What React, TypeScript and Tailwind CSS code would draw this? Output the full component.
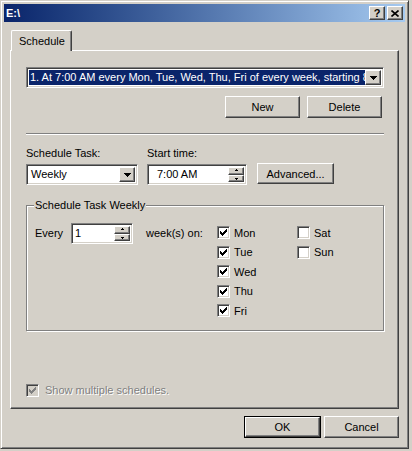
import type { ReactNode } from "react";

// classic win2k bevels
const raised =
    "border border-t-white border-l-white border-r-[#404040] border-b-[#404040] shadow-[inset_-1px_-1px_#808080] bg-[#d4d0c8]";
const sunken =
    "border border-t-[#808080] border-l-[#808080] border-r-white border-b-white shadow-[inset_1px_1px_#404040,inset_-1px_-1px_#d4d0c8]";

function Check({ disabled }: { disabled?: boolean }) {
    const fill = disabled ? "#808080" : "#000";
    return (
        <svg width="7" height="7" viewBox="0 0 7 7" shapeRendering="crispEdges">
            {[2, 3, 4, 3, 2, 1, 0].map((y, x) => (
                <rect key={x} x={x} y={y} width="1" height="3" fill={fill} />
            ))}
        </svg>
    );
}

function CheckBox({ checked, disabled }: { checked?: boolean; disabled?: boolean }) {
    return (
        <div
            className={`${sunken} flex h-[13px] w-[13px] shrink-0 items-center justify-center ${
                disabled ? "bg-[#d4d0c8]" : "bg-white"
            }`}
        >
            {checked && <Check disabled={disabled} />}
        </div>
    );
}

function DownArrow() {
    return (
        <svg width="7" height="4" viewBox="0 0 7 4" shapeRendering="crispEdges">
            <rect x="0" y="0" width="7" height="1" fill="#000" />
            <rect x="1" y="1" width="5" height="1" fill="#000" />
            <rect x="2" y="2" width="3" height="1" fill="#000" />
            <rect x="3" y="3" width="1" height="1" fill="#000" />
        </svg>
    );
}

function TinyArrow({ up }: { up?: boolean }) {
    return (
        <svg width="5" height="3" viewBox="0 0 5 3" shapeRendering="crispEdges">
            {up ? (
                <>
                    <rect x="2" y="0" width="1" height="1" fill="#000" />
                    <rect x="1" y="1" width="3" height="1" fill="#000" />
                </>
            ) : (
                <>
                    <rect x="1" y="1" width="3" height="1" fill="#000" />
                    <rect x="2" y="2" width="1" height="1" fill="#000" />
                </>
            )}
        </svg>
    );
}

function DropButton() {
    return (
        <div className={`${raised} flex h-full w-[16px] shrink-0 items-center justify-center`}>
            <DownArrow />
        </div>
    );
}

function SpinButtons() {
    return (
        <div className="flex h-full w-[16px] shrink-0 flex-col">
            <div className={`${raised} flex flex-1 items-center justify-center`}>
                <TinyArrow up />
            </div>
            <div className={`${raised} flex flex-1 items-center justify-center`}>
                <TinyArrow />
            </div>
        </div>
    );
}

function Button({ className, children }: { className: string; children: ReactNode }) {
    return <div className={`${raised} flex items-center justify-center ${className}`}>{children}</div>;
}

function Day({ label, checked }: { label: string; checked?: boolean }) {
    return (
        <div className="flex h-[19.5px] items-center gap-[4px]">
            <CheckBox checked={checked} />
            <span>{label}</span>
        </div>
    );
}

export default function App() {
    return (
        <div className="h-[451px] w-[412px] bg-[#d4d0c8] font-['Liberation_Sans',Arial,sans-serif] text-[11px] leading-[14px] text-black">
            <div className="flex h-[449px] w-[409px] flex-col border border-t-[#d4d0c8] border-l-[#d4d0c8] border-r-[#404040] border-b-[#404040] p-[3px] shadow-[inset_1px_1px_white,inset_-1px_-1px_#808080]">
                {/* title bar */}
                <div className="flex h-[18px] items-center bg-linear-to-r from-[#0a246a] to-[#a6caf0] pl-[2px] pr-[2px]">
                    <span className="font-bold text-white">{"E:\\"}</span>
                    <div className="ml-auto flex gap-[2px]">
                        <div className={`${raised} flex h-[14px] w-[16px] items-center justify-center text-[11px] font-bold leading-none`}>
                            ?
                        </div>
                        <div className={`${raised} flex h-[14px] w-[16px] items-center justify-center`}>
                            <svg width="8" height="7" viewBox="0 0 8 7">
                                <path d="M0.5 0.5 L7.5 6.5 M7.5 0.5 L0.5 6.5" stroke="#000" strokeWidth="1.6" />
                            </svg>
                        </div>
                    </div>
                </div>

                <div className="flex flex-col px-[6px] pt-[8px]">
                    <div className="relative z-10 -mb-[1px] ml-[1px] flex h-[21px] w-[61px] items-center rounded-t-[2px] border-t border-l border-r border-t-white border-l-white border-r-[#404040] bg-[#d4d0c8] pl-[7px] shadow-[inset_-1px_0_#808080]">
                        Schedule
                    </div>

                    <div className={`${raised} flex h-[359px] flex-col pl-[15px] pt-[16px]`}>
                        <div className={`${sunken} flex h-[21px] w-[358px] bg-white p-[2px]`}>
                            <div className="flex-1 overflow-hidden whitespace-nowrap bg-[#0a246a] pl-[1px] leading-[15px] text-white">
                                1. At 7:00 AM every Mon, Tue, Wed, Thu, Fri of every week, starting 8/1/2005
                            </div>
                            <DropButton />
                        </div>

                        <div className="mt-[8px] flex w-[358px] justify-end gap-[7px] pr-[2px]">
                            <Button className="h-[22px] w-[75px]">New</Button>
                            <Button className="h-[22px] w-[75px]">Delete</Button>
                        </div>

                        <div className="mt-[15px] h-[2px] w-[358px] border-t border-b border-t-[#808080] border-b-white" />

                        <div className="mt-[11px] flex items-end">
                            <div className="flex w-[112px] flex-col gap-[4px]">
                                <span>Schedule Task:</span>
                                <div className={`${sunken} flex h-[21px] bg-white p-[2px]`}>
                                    <span className="flex-1 pl-[2px] leading-[15px]">Weekly</span>
                                    <DropButton />
                                </div>
                            </div>
                            <div className="ml-[9px] flex w-[100px] flex-col gap-[4px]">
                                <span>Start time:</span>
                                <div className={`${sunken} flex h-[21px] bg-white p-[2px]`}>
                                    <span className="flex-1 pl-[7px] leading-[15px]">7:00 AM</span>
                                    <SpinButtons />
                                </div>
                            </div>
                            <Button className="mb-[1px] ml-[10px] h-[21px] w-[77px]">Advanced...</Button>
                        </div>

                        <div className="mt-[20px] flex h-[126px] w-[358px] flex-col border border-[#808080] shadow-[inset_1px_1px_white,1px_1px_white]">
                            <span className="-mt-[8px] ml-[7px] self-start bg-[#d4d0c8] px-[1px]">Schedule Task Weekly</span>
                            <div className="mt-[11px] flex pl-[8px]">
                                <div className="flex h-[19px] w-[36px] items-center">Every</div>
                                <div className={`${sunken} flex h-[21px] w-[62px] bg-white p-[2px]`}>
                                    <span className="flex-1 pl-[1px] leading-[15px]">1</span>
                                    <SpinButtons />
                                </div>
                                <div className="ml-[13px] flex h-[19px] w-[71px] items-center">week(s) on:</div>
                                <div className="flex w-[80px] flex-col">
                                    <Day label="Mon" checked />
                                    <Day label="Tue" checked />
                                    <Day label="Wed" checked />
                                    <Day label="Thu" checked />
                                    <Day label="Fri" checked />
                                </div>
                                <div className="flex flex-col">
                                    <Day label="Sat" />
                                    <Day label="Sun" />
                                </div>
                            </div>
                        </div>

                        <div className="mt-[52px] flex h-[14px] items-center gap-[6px]">
                            <CheckBox checked disabled />
                            <span className="text-[#808080] [text-shadow:1px_1px_0_#fff]">Show multiple schedules.</span>
                        </div>
                    </div>

                    <div className="mt-[7px] flex justify-end gap-[3px]">
                        <div className="h-[22px] w-[77px] border border-black">
                            <Button className="h-full w-full">OK</Button>
                        </div>
                        <Button className="h-[22px] w-[75px]">Cancel</Button>
                    </div>
                </div>
            </div>
        </div>
    );
}
